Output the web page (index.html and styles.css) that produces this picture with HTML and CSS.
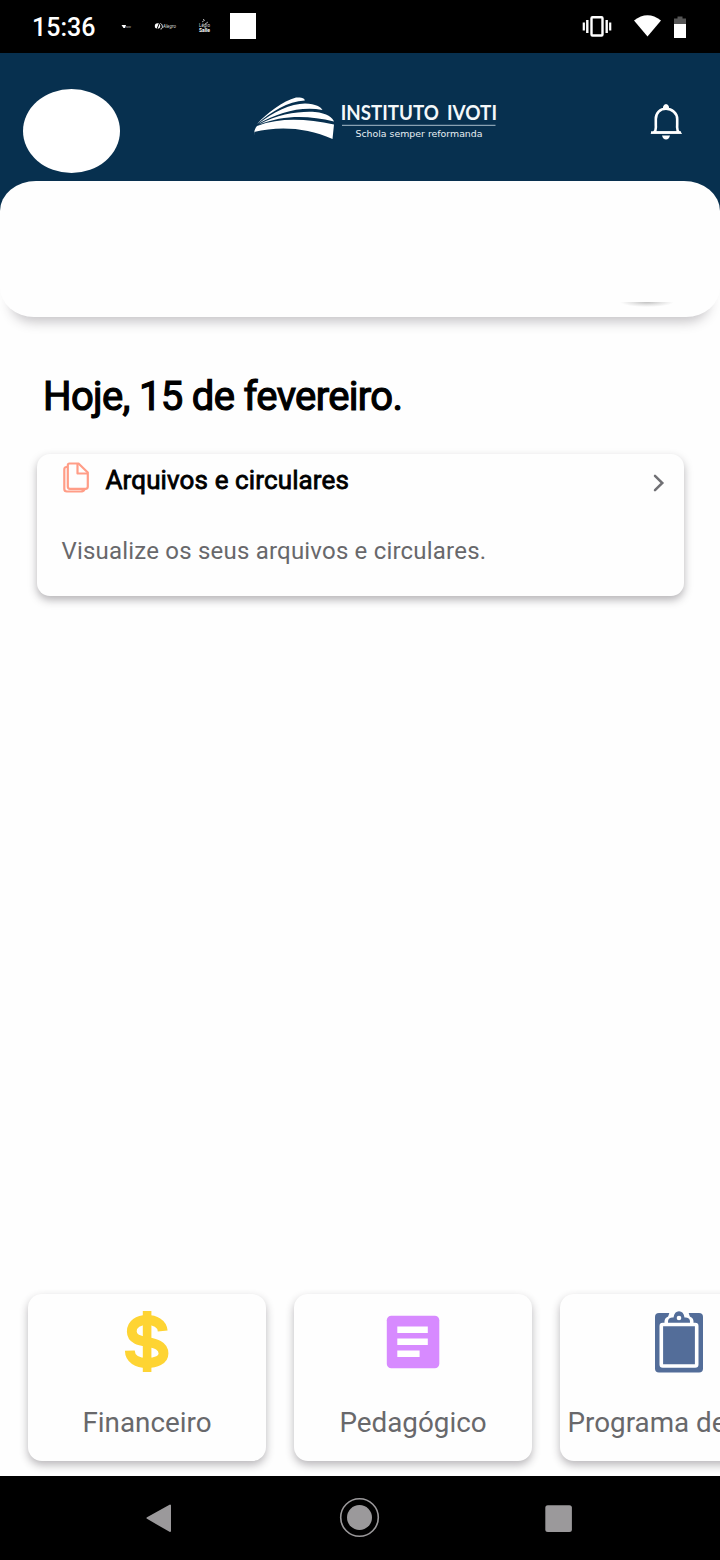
FILE: index.html
```html
<!DOCTYPE html>
<html lang="pt-BR">
<head>
<meta charset="utf-8">
<title>Instituto Ivoti</title>
<link rel="stylesheet" href="styles.css">
</head>
<body>
<div class="screen">
  <div class="status">
    <span class="clock">15:36</span>
    <svg class="notices" width="84" height="20" viewBox="0 0 84 20">
      <path d="M1.500 9h4.500l-1 3H3.500z" fill="#fff"/>
      <text x="5.500" y="12" font-size="4" textLength="5.500" lengthAdjust="spacingAndGlyphs" fill="#bbb">now</text>
      <circle cx="37.500" cy="10" r="2.700" fill="#fff"/>
      <path d="M39 8l-2 5" stroke="#000"/>
      <path d="M40.500 13c3 0 2-5 0-5.500" stroke="#fff" fill="none"/>
      <text x="43" y="12" font-size="5" font-style="italic" textLength="13" lengthAdjust="spacingAndGlyphs" fill="#ddd">Alegro</text>
      <path d="M82 6l3-2M85 8l3-2M83 4l1-1" stroke="#ccc" stroke-width=".8"/>
      <text x="79" y="11" font-size="5" textLength="11" lengthAdjust="spacingAndGlyphs" fill="#ddd">L&#233;gio</text>
      <text x="79" y="15.500" font-size="5" font-weight="700" textLength="11" lengthAdjust="spacingAndGlyphs" fill="#fff">Salle</text>
    </svg>
    <span class="notice-box"></span>
    <svg class="system" width="106" height="26" viewBox="0 0 106 26">
      <g fill="none" stroke="#fff">
        <rect x="9.500" y="4.300" width="11" height="18.200" rx="1" stroke-width="2.400"/>
        <path d="M5.300 7v13M24.700 7v13" stroke-width="2.400"/>
        <path d="M1.800 9.500v8M28.200 9.500v8" stroke-width="2.200"/>
      </g>
      <path d="M52 7.500Q65.500-2.800 79 7.500L65.500 23.500z" fill="#fff"/>
      <path d="M92 5.500h3.500v-2h5v2h3.500v6H92z" fill="#555"/>
      <path d="M92 11h12v14H92z" fill="#fff"/>
    </svg>
  </div>

  <header class="header">
    <span class="avatar"></span>
    <svg class="logo" width="246" height="48" viewBox="0 0 246 48">
      <g fill="#fff">
        <path d="M1 43C1 38 2 35 4 33C28 24 54 26 81 31.500L79.500 46C53 34 25 33 1 39z"/>
        <path d="M4 31C14 20 30 8 43 4.500C49 4 52 5.500 51.800 7.500C35 8 18 19 4 31z"/>
        <path d="M5 31C20 19 38 10.500 52 10.500C63 11 68 14 69.500 17C47 13 25 20 5 31z"/>
        <path d="M6 31.500C25 21 47 18 62 19C74 20 80 25 81 28.500C55 22 30 22 6 31.500z"/>
      </g>
      <text class="logo-name" x="87.800" y="26.800" textLength="98" lengthAdjust="spacingAndGlyphs">INSTITUTO</text>
      <text class="logo-name" x="194" y="26.800" textLength="50" lengthAdjust="spacingAndGlyphs">IVOTI</text>
      <path d="M89 32.300h153.500" stroke="#a9bdca" stroke-width="1"/>
      <text class="logo-motto" x="102.500" y="44" textLength="127" lengthAdjust="spacingAndGlyphs">Schola semper reformanda</text>
    </svg>
    <svg class="bell" width="32" height="38" viewBox="0 0 32 38">
      <path d="M4 29.500C6.500 27.500 5.800 26 5.800 21V16C5.800 10 10 5.800 16 5.800S27.200 10 27.200 16V21C27.200 26 26.500 27.500 29 29.500z" fill="none" stroke="#fff" stroke-width="2.600"/>
      <path d="M13 5.300V3.500Q14 1 16 1T19 3.500V5.300z" fill="#fff"/>
      <path d="M1 28.300h30v2.400H1z" fill="#fff"/>
      <path d="M12 32.500h8Q19 36.500 16 36.500T12 32.500z" fill="#fff"/>
    </svg>
  </header>

  <section class="sheet"><span class="sheet-shade"></span></section>

  <main class="content">
    <h1 class="date">Hoje, 15 de fevereiro.</h1>
    <article class="card">
      <div class="card-head">
        <svg width="27" height="32" viewBox="0 0 27 32" fill="none" stroke="#ff9d87" stroke-width="2.200" stroke-linejoin="round">
          <path d="M6.500 1.500H15.500L24.800 10.500V24.500Q24.800 26.800 22.500 26.800H7Q4.800 26.800 4.800 24.500V3.500Q4.800 1.500 6.500 1.500z"/>
          <path d="M14.500 2V11.500H24.500" />
          <path d="M4.500 5H3.500Q1.300 5 1.300 7.500V27Q1.300 29.500 4 29.500H17.500Q20.500 29.500 21.500 27.500"/>
        </svg>
        <h2 class="card-title">Arquivos e circulares</h2>
        <svg class="chevron" width="12" height="18" viewBox="0 0 12 18"><path d="M2 1.800L9.300 9L2 16.200" fill="none" stroke="#707074" stroke-width="2.500" stroke-linecap="round"/></svg>
      </div>
      <p class="card-text">Visualize os seus arquivos e circulares.</p>
    </article>
  </main>

  <section class="shortcuts">
    <div class="tile">
      <svg width="46" height="62" viewBox="0 0 46 62">
        <path d="M38.700 20C38 12.500 31 9 23 9C14 9 7.800 13 7.800 20.500C7.800 36 39.500 26 39.500 42.500C39.500 49 32 52 23 52C13 52 6 48 5.800 39.700" fill="none" stroke="#fed433" stroke-width="9.800"/>
        <path d="M18.800 0h8.600v61h-8.600z" fill="#fed433"/>
      </svg>
      <span class="label">Financeiro</span>
    </div>
    <div class="tile">
      <svg width="54" height="62" viewBox="0 0 54 62">
        <rect x=".8" y="4.700" width="52.500" height="52.500" rx="4.500" fill="#d78aff"/>
        <path d="M11.300 15.500h30.500v6.500H11.300zM11.300 27.500h30.500V34H11.300zM11.300 39.500h22.300V46H11.300z" fill="#fff"/>
      </svg>
      <span class="label">Pedag&#243;gico</span>
    </div>
    <div class="tile">
      <svg width="48" height="62" viewBox="0 0 48 62">
        <rect y="2" width="48" height="59.500" rx="4" fill="#536d99"/>
        <path d="M15 0h18L37 12H11z" fill="#fff"/>
        <rect x="6.300" y="13.500" width="35.400" height="41.500" rx="1.500" fill="none" stroke="#fff" stroke-width="3.600"/>
        <path d="M9.500 14V10Q10 5.500 15 5.500H17Q18 0 24 0T31 5.500H33Q38 5.500 38.500 10V14z" fill="#fff"/>
        <path d="M13 11.800Q12.500 7 17 6.500H18.500Q19.500 .3 24 .3T29.500 6.500H31Q35.500 7 35 11.800z" fill="#536d99"/>
        <circle cx="24" cy="7" r="2.300" fill="#fff"/>
      </svg>
      <span class="label label-start">Programa de</span>
    </div>
  </section>

  <nav class="navbar">
    <svg width="720" height="84" viewBox="0 0 720 84" fill="#9b999b">
      <path d="M147.500 42L170 29.500V55z" stroke="#9b999b" stroke-width="2" stroke-linejoin="round"/>
      <circle cx="359.500" cy="41.500" r="12.500"/>
      <circle cx="359.500" cy="41.500" r="18.800" fill="none" stroke="#9b999b" stroke-width="1.600"/>
      <rect x="545.300" y="29.300" width="26.600" height="26.600" rx="2.500"/>
    </svg>
  </nav>
</div>
</body>
</html>
```
FILE: styles.css
```css
* { box-sizing: border-box; }
body { margin: 0; font-family: Roboto, "Liberation Sans", sans-serif; }
h1, h2, p { margin: 0; font-weight: 400; }
svg { display: block; flex: none; }
.screen { width: 720px; height: 1560px; display: flex; flex-direction: column; overflow: hidden; background: #fefefe; }

.status { height: 53px; flex: none; display: flex; align-items: center; padding: 0 32px 1px; background: #000; }
.clock { width: 88px; font-size: 25px; font-weight: 500; color: #fff; white-space: nowrap; padding-top: 3px; }
.notices { overflow: visible; }
.notice-box { width: 26px; height: 26px; margin-left: 26px; background: #fff; }
.system { margin-left: auto; }

.header { height: 162px; flex: none; display: flex; align-items: flex-start; padding: 36px 38px 0 23px; background: #07304f; }
.avatar { width: 97px; height: 84px; border-radius: 50%; background: #fff; }
.logo { margin: 4px 0 0 133px; overflow: visible; }
.logo-name { font-family: Lato, sans-serif; font-size: 20px; font-weight: 700; fill: #f4f8fa; }
.logo-motto { font-family: "DejaVu Sans", sans-serif; font-size: 9.5px; fill: #e8eff4; }
.bell { margin: 14px 0 0 auto; }

.sheet { height: 136px; flex: none; margin-top: -34px; border-radius: 36px 36px 34px 34px / 30px 30px 30px 30px; background: #fefefe; display: flex; align-items: flex-end; justify-content: flex-end; padding: 0 46px 10px 0; box-shadow: 0 16px 12px -11px rgba(50, 45, 55, .27); }
.sheet-shade { width: 54px; height: 5px; background: radial-gradient(ellipse 50% 100% at 50% 0, #c0c0c0, #e5e5e5 55%, transparent); }

.content { flex: 1; padding: 57px 36px 0 37px; }
.date { height: 46px; padding-left: 6px; font-size: 40px; line-height: 46px; color: #000; -webkit-text-stroke: 1.2px #000; letter-spacing: -.66px; white-space: nowrap; }
.card { height: 142px; margin-top: 34px; padding: 8px 19px 0 26px; border-radius: 13px; background: #fefefe; box-shadow: 0 4px 8px rgba(40, 35, 45, .34); }
.card-head { display: flex; height: 36px; align-items: flex-start; }
.card-title { margin-left: 15.5px; padding-top: 2px; font-size: 26px; line-height: 32px; letter-spacing: .12px; color: #000; -webkit-text-stroke: .8px #000; white-space: nowrap; }
.chevron { margin: 12px 0 0 auto; }
.card-text { margin: 39px 0 0 -1.5px; font-size: 24px; line-height: 28px; letter-spacing: .2px; color: #68686b; white-space: nowrap; }

.shortcuts { height: 182px; flex: none; display: flex; gap: 28px; padding-left: 28px; }
.tile { width: 238px; height: 167px; flex: none; display: flex; flex-direction: column; align-items: center; padding-top: 17px; border-radius: 14px; background: #fefefe; box-shadow: 0 4px 8px rgba(40, 35, 45, .32); }
.label { margin-top: 34px; font-size: 27.8px; line-height: 32px; color: #68686b; white-space: nowrap; }
.label-start { align-self: flex-start; margin-left: 7.5px; }

.navbar { height: 84px; flex: none; background: #000; }
```
